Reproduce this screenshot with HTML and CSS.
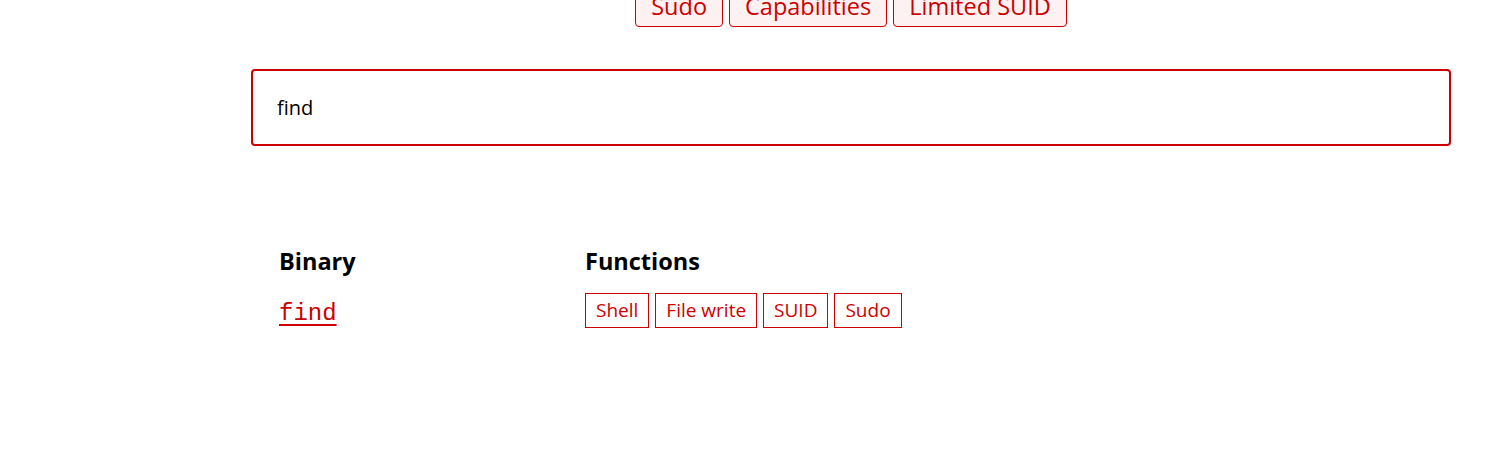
FILE: index.html
```html
<!DOCTYPE html>
<html lang="en">
<head>
  <meta charset="UTF-8">
  <meta name="viewport" content="width=device-width, initial-scale=1.0">
  <title>GTFOBins</title>
  <link rel="stylesheet" href="styles.css">
</head>
<body>

<div class="page">
  <!-- Filter -->
  <div class="filters">
    <button class="filter">Sudo</button>
    <button class="filter">Capabilities</button>
    <button class="filter">Limited SUID</button>
  </div>

  <input id="search" class="search" type="text" value="find" autofocus>

  <table class="bin-table">
    <thead>
      <tr>
        <th class="col-bin">Binary</th>
        <th>Functions</th>
      </tr>
    </thead>
    <tbody>
      <tr>
        <td class="col-bin"><a href="#find" class="bin-name">find</a></td>
        <td>
          <ul class="functions">
            <li><a href="#shell">Shell</a></li>
            <li><a href="#file-write">File write</a></li>
            <li><a href="#suid">SUID</a></li>
            <li><a href="#sudo">Sudo</a></li>
          </ul>
        </td>
      </tr>
    </tbody>
  </table>
</div>

</body>
</html>
```

FILE: styles.css
```css
:root {
  --red: #c00;
  --red-light: #fdf1f1;
  --text: #000;
}

* {
  margin: 0;
  padding: 0;
  box-sizing: border-box;
}

body {
  font-family: 'Segoe UI', 'Open Sans', 'Noto Sans', sans-serif;
  color: var(--text);
  background: #fff;
  overflow: hidden;
}

.page {
  width: 1200px;
  margin-left: 251px;
}

.filters {
  display: flex;
  justify-content: center;
  gap: 6px;
  margin-top: -15px;
}

.filter {
  font-family: inherit;
  font-size: 23.5px;
  line-height: 28px;
  color: var(--red);
  background: var(--red-light);
  border: 1px solid var(--red);
  border-radius: 4px;
  padding: 6px 15px;
}

.search {
  display: block;
  width: 100%;
  height: 77px;
  margin-top: 42px;
  padding: 0 24px;
  font-family: inherit;
  font-size: 20px;
  border: 2px solid var(--red);
  border-radius: 4px;
  outline: none;
  caret-color: #000;
}

.bin-table {
  margin-top: 96px;
  margin-left: 20px;
  border-collapse: collapse;
  text-align: left;
}

.bin-table th {
  font-size: 23.5px;
  font-weight: bold;
  padding: 3px 8px 7px;
  line-height: 32px;
}

.bin-table td {
  padding: 9px 8px 6px;
  vertical-align: middle;
}

.col-bin {
  width: 306px;
}

.bin-name {
  display: inline-block;
  padding-top: 6px;
  font-family: 'Liberation Mono', 'DejaVu Sans Mono', monospace;
  font-size: 24px;
  color: var(--red);
  text-decoration: underline;
  text-underline-offset: 4px;
}

.functions {
  list-style: none;
  display: flex;
  gap: 6px;
}

.functions a {
  display: block;
  font-size: 19px;
  line-height: 33px;
  padding: 0 10px;
  color: var(--red);
  border: 1px solid var(--red);
  text-decoration: none;
}
```
